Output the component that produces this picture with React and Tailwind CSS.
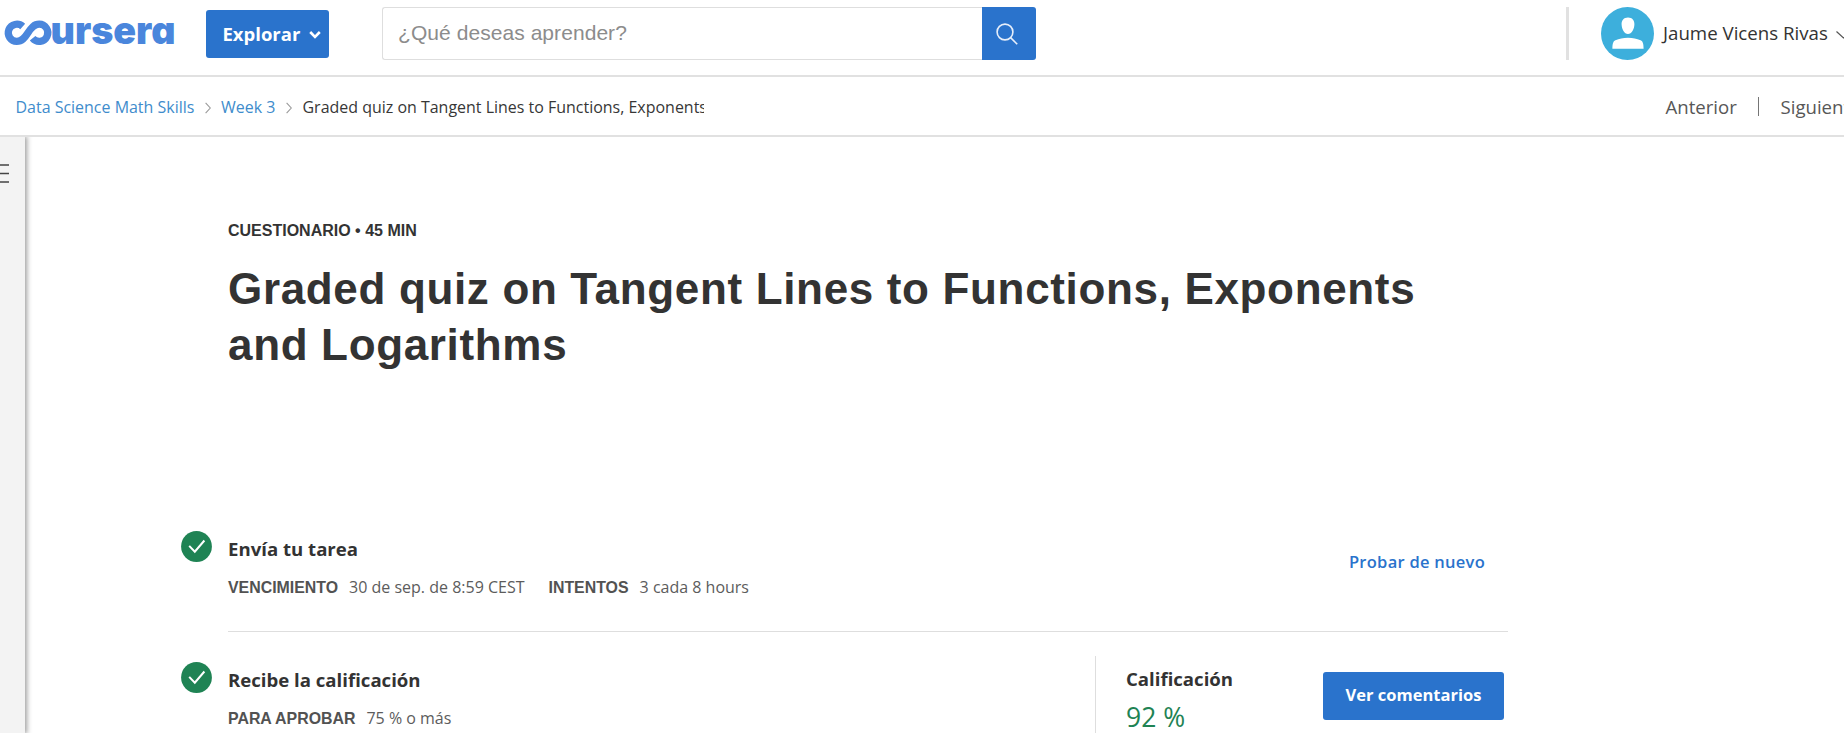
const OPEN = "font-['Open_Sans',sans-serif]";
const ARIAL = "font-['Liberation_Sans',Arial,sans-serif]";

function Logo() {
  return (
    <svg className="block h-[53px] w-[176px] shrink-0 overflow-visible" viewBox="0 0 176 53" role="img" aria-label="coursera">
      <path
        d="M22.700 19.500A8.600 8.600 0 1 0 16.800 34.400C22 34.400 24.800 30.800 28 25.800C31.200 20.800 34 17.200 39.200 17.200A8.600 8.600 0 1 1 32.600 31.300"
        fill="none"
        stroke="#4a86dc"
        strokeWidth="7.200"
      />
      <text
        x="50.500"
        y="36.800"
        textLength="125"
        lengthAdjust="spacingAndGlyphs"
        fill="#4a86dc"
        className="font-['Inter',sans-serif] text-[38.500px] font-black [font-feature-settings:'cv11']"
      >
        ursera
      </text>
    </svg>
  );
}

function Header() {
  return (
    <header className="flex h-[77px] items-start border-b-2 border-[#e1e1e1] pt-[7px]">
      <Logo />
      <button className={`mt-[3px] ml-[30px] flex h-12 w-[123px] shrink-0 items-center rounded-[3px] bg-[#2a73cc] pl-[16.500px] text-[18.500px] font-bold text-white ${OPEN}`}>
        Explorar
        <svg className="mt-0.5 ml-[9px] shrink-0" width="12" height="10" viewBox="0 0 12 10" fill="none" stroke="currentColor" strokeWidth="2.600">
          <path d="M1.200 2 6 6.800 10.800 2" />
        </svg>
      </button>
      <div className="ml-[53px] flex h-[53px] w-[654px] shrink-0">
        <div className={`flex flex-1 items-center rounded-l-[3px] border border-r-0 border-[#dedede] pl-[15px] text-[21px] tracking-[0.060px] text-[#8c8c8c] ${ARIAL}`}>
          <span className="-mt-0.5">¿Qué deseas aprender?</span>
        </div>
        <button className="flex w-[54px] items-center justify-center rounded-r-[3px] bg-[#2a73cc]" aria-label="Buscar">
          <svg className="-ml-1" width="22" height="22" viewBox="0 0 22 22" fill="none" stroke="#e6eefa" strokeWidth="1.600">
            <circle cx="9" cy="9" r="7.900" />
            <path d="m14.600 14.600 6.600 6.600" />
          </svg>
        </button>
      </div>
      <div className="ml-[530px] h-[53px] w-[3px] shrink-0 bg-[#e1e1e1]" />
      <svg className="ml-8 shrink-0" width="53" height="53" viewBox="0 0 53 53">
        <circle cx="26.500" cy="26.500" r="26.500" fill="#3dafdc" />
        <path
          fill="#fff"
          d="M27 10.600c4.200 0 6.600 2.800 6.400 7-.2 4.800-2.700 9.500-6.400 9.500s-6.200-4.700-6.400-9.500c-.2-4.200 2.200-7 6.400-7zM11.400 41.700c.1-4.500.5-7.400 3-8.400 4-1.600 7.600-2.500 12.600-2.500s8.600.9 12.600 2.500c2.500 1 2.900 3.900 3 8.400z"
        />
      </svg>
      <span className={`ml-[9px] h-[53px] shrink-0 whitespace-nowrap text-[18.700px] leading-[52px] text-[#333] ${OPEN}`}>Jaume Vicens Rivas</span>
      <svg className="mt-[23px] ml-[8px] shrink-0" width="18" height="10" viewBox="0 0 18 10" fill="none" stroke="#555" strokeWidth="1.200">
        <path d="m.5 1.500 7 6.500 7-6.500" />
      </svg>
    </header>
  );
}

function Crumb() {
  return (
    <svg className="mt-px shrink-0" width="6" height="12" viewBox="0 0 6 12" fill="none" stroke="#999" strokeWidth="1.100">
      <path d="M.6.800 5.300 6 .6 11.200" />
    </svg>
  );
}

function Breadcrumbs() {
  return (
    <nav className={`flex h-[60px] items-center border-b-2 border-[#e1e1e1] pt-[3px] pl-[15.500px] text-[15.980px] whitespace-nowrap ${OPEN}`}>
      <a className="w-[179px] shrink-0 text-[#3e8ccc]">Data Science Math Skills</a>
      <div className="ml-[10.500px] flex shrink-0 items-center gap-[10px]">
        <Crumb />
        <a className="w-[55px] text-[#3e8ccc]">Week 3</a>
        <Crumb />
      </div>
      <span className="ml-[10.500px] w-[401px] shrink-0 overflow-hidden text-[15.980px] text-[#373737]">
        Graded quiz on Tangent Lines to Functions, Exponents and Logarithms
      </span>
      <div className="-mt-px ml-[962px] flex shrink-0 items-center text-[18.600px] text-[#575757]">
        <a className="w-[92px]">Anterior</a>
        <span className="h-[19px] w-px bg-[#757575]" />
        <a className="ml-[22px]">Siguiente</a>
      </div>
    </nav>
  );
}

function Check() {
  return (
    <svg className="shrink-0" width="31" height="31" viewBox="0 0 31 31">
      <circle cx="15.500" cy="15.500" r="15.400" fill="#1f8354" />
      <path d="m8.200 14.900 5.600 5.800 9.600-11.200" fill="none" stroke="#fff" strokeWidth="2" />
    </svg>
  );
}

function StepTitle({ children }) {
  return <h2 className={`mt-1 text-[18.600px] leading-7 font-bold text-[#333] ${OPEN}`}>{children}</h2>;
}

function Label({ children }) {
  return <span className={`text-[15.900px] font-bold text-[#525252] ${ARIAL}`}>{children}</span>;
}

function Value({ children }) {
  return <span className={`text-[16px] text-[#5c5c5c] ${OPEN}`}>{children}</span>;
}

export default function App() {
  return (
    <div className="flex h-[733px] w-[1844px] flex-col overflow-hidden bg-white">
      <Header />
      <Breadcrumbs />
      <div className="flex min-h-0 flex-1 overflow-hidden">
        <aside className="w-[25px] shrink-0 bg-[#f3f3f3] pt-[27px] shadow-[1px_0_5px_1px_rgba(0,0,0,0.38)]">
          <svg width="9" height="19" viewBox="0 0 9 19" stroke="#444" strokeWidth="1.300">
            <path d="M0 1h9M0 9.500h9M0 18h9" />
          </svg>
        </aside>
        <main className="ml-[155.500px] w-[1328px] shrink-0">
          <div className="h-[394px] pt-[84px] pl-[47.500px]">
            <p className={`text-[16px] leading-5 font-bold text-[#333] ${ARIAL}`}>CUESTIONARIO • 45 MIN</p>
            <h1 className={`mt-5 w-[1250px] text-[44px] leading-[56px] font-bold tracking-[0.660px] text-[#333] ${ARIAL}`}>
              Graded quiz on Tangent Lines to Functions, Exponents and Logarithms
            </h1>
          </div>

          <section className="flex h-[101px] items-start gap-[16.500px]">
            <Check />
            <div className="flex h-full w-[1280px] shrink-0 justify-between border-b border-[#dedede]">
              <div>
                <StepTitle>Envía tu tarea</StepTitle>
                <div className="mt-3 flex h-6 items-baseline gap-[11px] leading-6 whitespace-nowrap">
                  <Label>VENCIMIENTO</Label>
                  <Value>30 de sep. de 8:59 CEST</Value>
                  <span className="ml-[13px] flex items-baseline gap-[11px]">
                    <Label>INTENTOS</Label>
                    <Value>3 cada 8 hours</Value>
                  </span>
                </div>
              </div>
              <a className={`mt-[19px] mr-[23px] text-[16.500px] leading-6 font-semibold tracking-[0.270px] text-[#2a73cc] ${OPEN}`}>Probar de nuevo</a>
            </div>
          </section>

          <section className="mt-[30px] flex items-start gap-[16.500px]">
            <Check />
            <div className="flex w-[1280px] shrink-0">
              <div className="w-[867px]">
                <StepTitle>Recibe la calificación</StepTitle>
                <div className="mt-3 flex h-6 items-baseline gap-[11px] leading-6 whitespace-nowrap">
                  <Label>PARA APROBAR</Label>
                  <Value>75 % o más</Value>
                </div>
              </div>
              <div className="-mt-[6px] flex h-[78px] flex-1 border-l border-[#dedede] pl-[30px]">
                <div className={`w-[197px] whitespace-nowrap ${OPEN}`}>
                  <h3 className="mt-[9px] text-[18.600px] leading-7 font-bold text-[#333]">Calificación</h3>
                  <p className="mt-2 text-[26.500px] leading-8 text-[#1f8354]">92 %</p>
                </div>
                <button className={`mt-4 h-12 w-[181px] rounded-[3px] bg-[#2a73cc] pb-px text-[16.500px] font-bold text-white ${OPEN}`}>Ver comentarios</button>
              </div>
            </div>
          </section>
        </main>
      </div>
    </div>
  );
}
